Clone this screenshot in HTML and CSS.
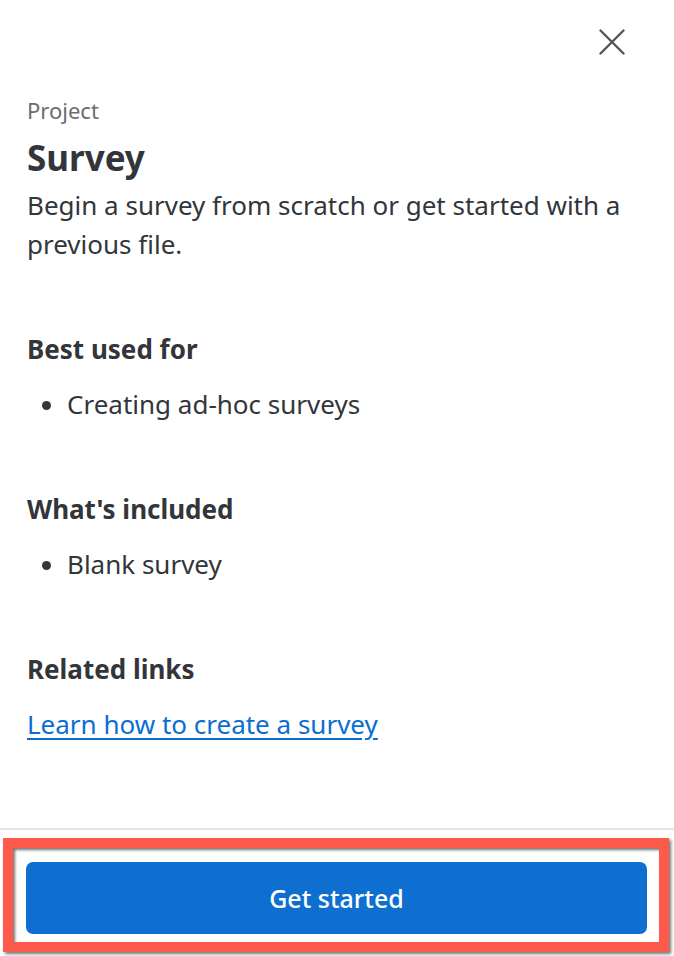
FILE: index.html
```html
<!DOCTYPE html>
<html lang="en">
<head>
<meta charset="utf-8">
<title>Survey</title>
<link rel="stylesheet" href="styles.css">
</head>
<body>
<div class="panel">
  <header class="topbar">
    <button class="close" aria-label="Close">
      <svg width="26" height="26" viewBox="0 0 26 26"><path d="M1.5 1.5 L24.5 24.5 M24.5 1.5 L1.5 24.5" stroke="#52565a" stroke-width="2.4" stroke-linecap="round" fill="none"/></svg>
    </button>
  </header>
  <main class="content">
    <p class="eyebrow">Project</p>
    <h1 class="title">Survey</h1>
    <p class="desc">Begin a survey from scratch or get started with a previous file.</p>
    <section class="block">
      <h2 class="block-title">Best used for</h2>
      <ul class="list"><li>Creating ad-hoc surveys</li></ul>
    </section>
    <section class="block">
      <h2 class="block-title">What's included</h2>
      <ul class="list"><li>Blank survey</li></ul>
    </section>
    <section class="block">
      <h2 class="block-title">Related links</h2>
      <a class="link" href="#">Learn how to create a survey</a>
    </section>
  </main>
  <footer class="footer">
    <button class="cta">Get started</button>
    <div class="annotation"></div>
  </footer>
</div>
</body>
</html>
```

FILE: styles.css
```css
* { box-sizing: border-box; }
html, body { margin: 0; padding: 0; background: #fff; }
body {
  font-family: "Noto Sans", "Open Sans", sans-serif;
  color: #32363a;
}
.panel {
  width: 674px;
  height: 956px;
  display: flex;
  flex-direction: column;
}
.topbar {
  height: 84px;
  display: flex;
  justify-content: flex-end;
  align-items: center;
  padding-right: 49px;
}
.close {
  border: 0;
  background: none;
  padding: 0;
  width: 26px;
  height: 26px;
  display: flex;
}
.content {
  padding: 12px 27px 0;
}
.eyebrow {
  margin: 0;
  font-size: 22px;
  line-height: 28px;
  color: #6a6d70;
}
.title {
  margin: 14px 0 0;
  font-size: 35px;
  line-height: 40px;
  font-weight: 700;
  color: #32363a;
}
.desc {
  margin: 8px 0 0;
  font-size: 26px;
  line-height: 39px;
}
.block { margin-top: 68px; }
.block-title {
  margin: 0;
  font-size: 26px;
  line-height: 34px;
  font-weight: 700;
}
.list {
  margin: 19px 0 0;
  padding-left: 40px;
  font-size: 26px;
  line-height: 39px;
}
.link {
  display: inline-block;
  margin-top: 19px;
  font-size: 26px;
  line-height: 39px;
  color: #0a6ed1;
  text-decoration: underline;
  text-underline-offset: 4px;
}
.footer {
  margin-top: auto;
  height: 128px;
  border-top: 2px solid #e5e5e5;
  padding: 32px 27px 0 26px;
  position: relative;
}
.cta {
  width: 621px;
  height: 72px;
  border: 0;
  border-radius: 7px;
  background: #0e6fd0;
  color: #fff;
  font-family: "Noto Sans", "Open Sans", sans-serif;
  font-size: 25px;
  font-weight: 500;
}
.annotation {
  position: absolute;
  left: 3px;
  top: 8px;
  width: 666px;
  height: 114px;
  border: 10px solid #fd5a4c;
  box-shadow: 2px 2px 3px rgba(0,0,0,0.55), inset 2px 2px 3px rgba(0,0,0,0.55);
  pointer-events: none;
}
```
